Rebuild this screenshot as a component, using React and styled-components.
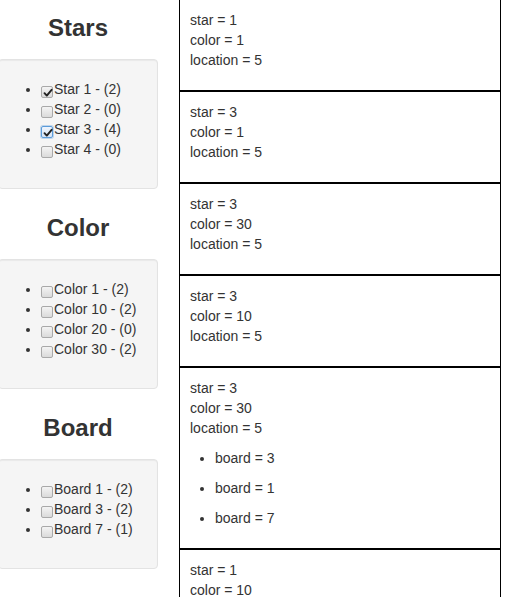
import React from "react";
import styled, { createGlobalStyle } from "styled-components";

const Global = createGlobalStyle`
  html, body { margin: 0; padding: 0; background: #fff; }
  body {
    font-family: "Liberation Sans", Arial, Helvetica, sans-serif;
    font-size: 14px;
    line-height: 20px;
    color: #333;
    overflow: hidden;
  }
  * { box-sizing: border-box; }
`;

const Page = styled.div`
  display: flex;
  align-items: flex-start;
`;

const Sidebar = styled.div`
  width: 160px;
  margin-left: -2px;
  display: flex;
  flex-direction: column;
`;

const Section = styled.section`
  padding-top: 15px;
  height: 200px;
`;

const Heading = styled.h3`
  margin: 0 0 18px;
  font-size: 24px;
  line-height: 26px;
  font-weight: bold;
  text-align: center;
  color: #333;
`;

const Well = styled.div`
  background: #f5f5f5;
  border: 1px solid #e3e3e3;
  border-radius: 4px;
  box-shadow: inset 0 1px 1px rgba(0, 0, 0, 0.05);
  padding: 19px;
`;

const FilterList = styled.ul`
  margin: 0 0 10px;
  padding-left: 23px;
`;

const FilterItem = styled.li`
  line-height: 20px;
`;

const Check = styled.span`
  display: inline-block;
  width: 12px;
  height: 12px;
  margin-right: 1px;
  vertical-align: -4px;
  border: 1px solid ${(p) => (p.$focus ? "#5b9bd9" : "#a9a9a9")};
  border-radius: 2px;
  background: ${(p) =>
    p.$focus
      ? "linear-gradient(#eef4fc, #d6e4f5)"
      : "linear-gradient(#f4f4f4, #dadada)"};
  box-shadow: ${(p) => (p.$focus ? "0 0 0 1px rgba(91,155,217,0.35)" : "none")};
  position: relative;
  svg {
    position: absolute;
    left: 1px;
    top: 1px;
  }
`;

const Results = styled.div`
  margin-left: 21px;
  margin-top: -1px;
  width: 322px;
  display: flex;
  flex-direction: column;
`;

const Card = styled.div`
  border: 1px solid #000;
  padding: 10px 10px 20px;
`;

const Line = styled.div`
  line-height: 20px;
`;

const BoardList = styled.ul`
  margin: 10px 0 0;
  padding-left: 25px;
`;

const BoardItem = styled.li`
  line-height: 20px;
  & + & {
    margin-top: 10px;
  }
`;

const CheckBox = ({ checked, focus }) => (
  <Check $focus={focus}>
    {checked && (
      <svg width="10" height="10" viewBox="0 0 10 10">
        <path
          d="M1.5 5.2 L3.8 7.6 L8.6 1.8"
          fill="none"
          stroke="#222"
          strokeWidth="1.9"
          strokeLinecap="round"
          strokeLinejoin="round"
        />
      </svg>
    )}
  </Check>
);

const filters = [
  {
    title: "Stars",
    items: [
      { label: "Star 1 - (2)", checked: true },
      { label: "Star 2 - (0)" },
      { label: "Star 3 - (4)", checked: true, focus: true },
      { label: "Star 4 - (0)" },
    ],
  },
  {
    title: "Color",
    items: [
      { label: "Color 1 - (2)" },
      { label: "Color 10 - (2)" },
      { label: "Color 20 - (0)" },
      { label: "Color 30 - (2)" },
    ],
  },
  {
    title: "Board",
    items: [
      { label: "Board 1 - (2)" },
      { label: "Board 3 - (2)" },
      { label: "Board 7 - (1)" },
    ],
  },
];

const results = [
  { star: 1, color: 1, location: 5 },
  { star: 3, color: 1, location: 5 },
  { star: 3, color: 30, location: 5 },
  { star: 3, color: 10, location: 5 },
  { star: 3, color: 30, location: 5, boards: [3, 1, 7] },
  { star: 1, color: 10, location: 5 },
];

export default function App() {
  return (
    <>
      <Global />
      <Page>
        <Sidebar>
          {filters.map((f) => (
            <Section key={f.title}>
              <Heading>{f.title}</Heading>
              <Well>
                <FilterList>
                  {f.items.map((it) => (
                    <FilterItem key={it.label}>
                      <CheckBox checked={it.checked} focus={it.focus} />
                      {it.label}
                    </FilterItem>
                  ))}
                </FilterList>
              </Well>
            </Section>
          ))}
        </Sidebar>
        <Results>
          {results.map((r, i) => (
            <Card key={i}>
              <Line>star = {r.star}</Line>
              <Line>color = {r.color}</Line>
              <Line>location = {r.location}</Line>
              {r.boards && (
                <BoardList>
                  {r.boards.map((b) => (
                    <BoardItem key={b}>board = {b}</BoardItem>
                  ))}
                </BoardList>
              )}
            </Card>
          ))}
        </Results>
      </Page>
    </>
  );
}
